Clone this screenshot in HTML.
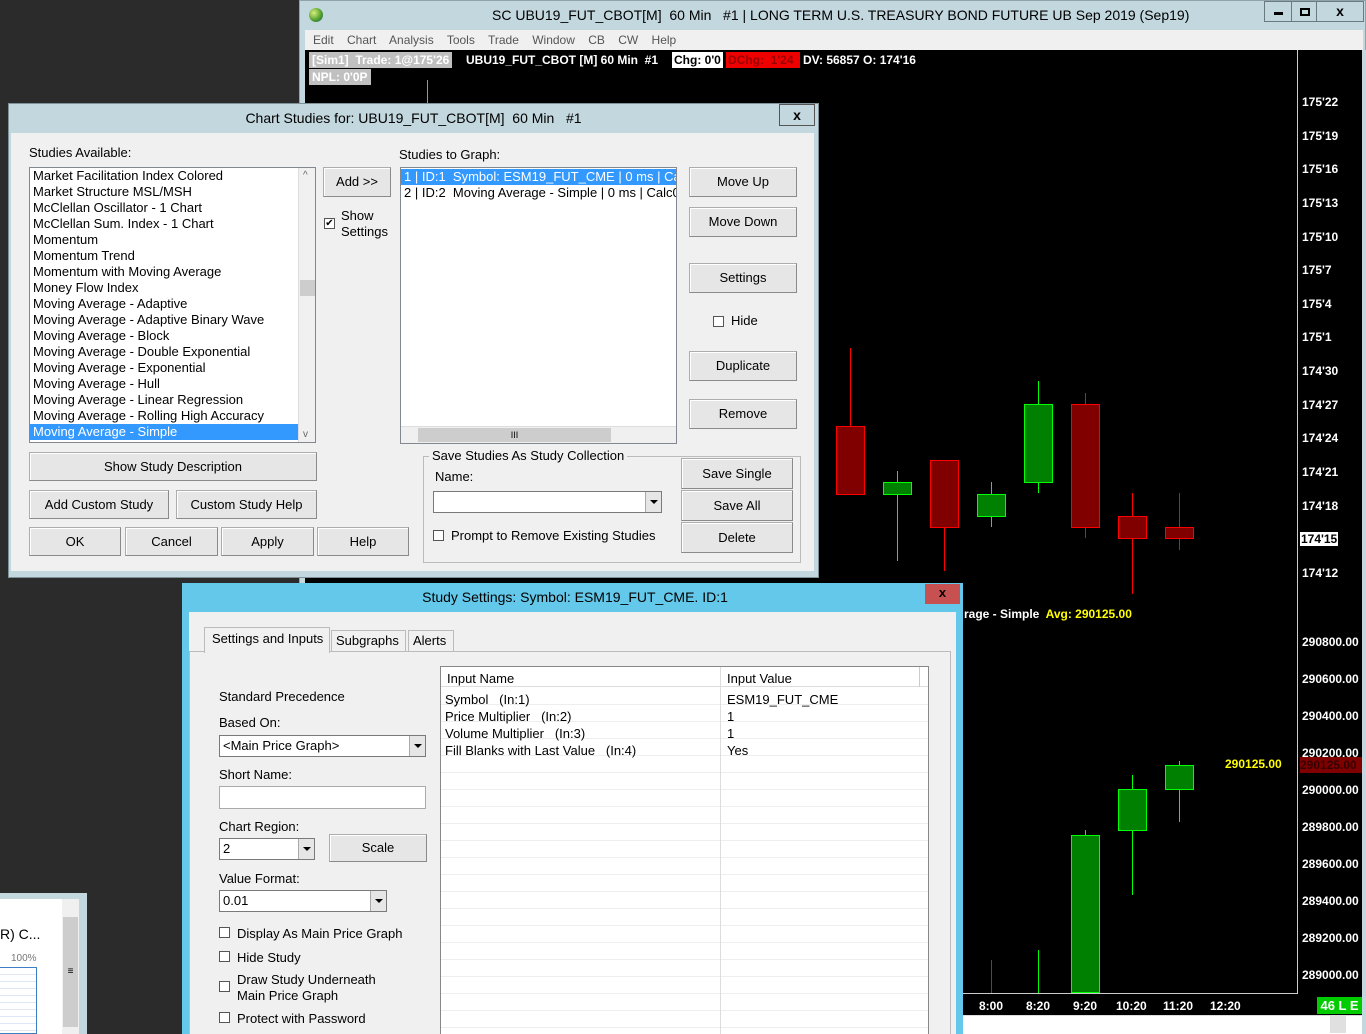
<!DOCTYPE html>
<html><head><meta charset="utf-8"><style>
*{box-sizing:border-box;margin:0;padding:0}
body{width:1366px;height:1034px;overflow:hidden;background:#2b2b2b;font-family:"Liberation Sans",sans-serif;font-size:13px;color:#000;position:relative}
.a{position:absolute}
.btn{position:absolute;background:#e6e6e6;border:1px solid #adadad;border-right-color:#8a8a8a;border-bottom-color:#8a8a8a;box-shadow:inset 1px 1px 0 #fff;text-align:center;font-size:13px}
.cb{position:absolute;width:11px;height:11px;border:1px solid #555;background:#fff}
.ch{font-weight:bold;font-size:12px;color:#fff;position:absolute;white-space:nowrap}
.px{position:absolute;left:1302px;font-weight:bold;font-size:12px;color:#fff}
.ln{position:absolute;width:1px}
.bd{position:absolute;border:1px solid}
.li{height:16px;line-height:16px;padding-left:3px;white-space:nowrap}
.combo{position:absolute;background:#fff;border:1px solid #7a7a7a}
.combo i{position:absolute;right:0;top:0;bottom:0;width:16px;background:#e6e6e6;border-left:1px solid #aaa}
.combo i:after{content:"";position:absolute;left:4px;top:8px;border:4px solid transparent;border-top:4px solid #000;border-bottom:0}
</style></head><body>

<!-- main window -->
<div class="a" style="left:299px;top:0;width:1067px;height:1034px;background:#c3d7de;border:1px solid #8fa3aa"></div>
<div class="a" style="left:309px;top:8px;width:14px;height:14px;border-radius:50%;background:radial-gradient(circle at 35% 35%,#d9f07a,#4a9a2a 60%,#2a5a8a)"></div>
<div class="a" style="left:492px;top:7px;font-size:14px">SC UBU19_FUT_CBOT[M]&nbsp; 60 Min&nbsp;&nbsp; #1 | LONG TERM U.S. TREASURY BOND FUTURE UB Sep 2019 (Sep19)</div>
<div class="a" style="left:1264px;top:1px;width:28px;height:21px;border:1px solid #6a7a80"><div class="a" style="left:9px;top:10px;width:9px;height:3px;background:#000"></div></div>
<div class="a" style="left:1291px;top:1px;width:26px;height:21px;border:1px solid #6a7a80"><div class="a" style="left:8px;top:6px;width:10px;height:8px;border:2px solid #000"></div></div>
<div class="a" style="left:1316px;top:1px;width:48px;height:21px;border:1px solid #6a7a80;font-weight:bold;text-align:center;line-height:19px;font-size:14px">x</div>
<div class="a" style="left:305px;top:30px;width:1058px;height:20px;background:#f0f0f0;color:#555;font-size:12px;line-height:20px;padding-left:8px;word-spacing:10px">Edit Chart Analysis Tools Trade Window CB CW Help</div>
<div class="a" style="left:305px;top:50px;width:1058px;height:965px;background:#000"></div>
<div class="a" style="left:1362px;top:50px;width:4px;height:984px;background:#c3d7de"></div>
<div class="ln" style="left:1297px;top:50px;height:944px;background:#ccc"></div>
<div class="a" style="left:963px;top:993px;width:335px;height:1px;background:#ccc"></div>

<div class="ch" style="left:309px;top:52px;background:#c0c0c0;padding:0 3px;height:16px;line-height:16px">[Sim1]&nbsp; Trade: 1@175'26</div>
<div class="ch" style="left:466px;top:52px;line-height:16px">UBU19_FUT_CBOT [M] 60 Min&nbsp; #1</div>
<div class="ch" style="left:672px;top:52px;background:#fff;color:#000;line-height:16px;padding:0 2px">Chg: 0'0</div>
<div class="ch" style="left:726px;top:52px;background:#e00;color:#900;line-height:16px;width:74px;padding-left:2px">DChg:&nbsp; 1'24</div>
<div class="ch" style="left:803px;top:52px;line-height:16px">DV: 56857 O: 174'16</div>
<div class="ch" style="left:309px;top:69px;background:#c0c0c0;padding:0 3px;height:16px;line-height:16px">NPL: 0'0P</div>
<div class="ln" style="left:427px;top:80px;height:24px;background:#0f0"></div>

<!-- price axis upper -->
<div class="px" style="top:95px">175'22</div><div class="px" style="top:129px">175'19</div><div class="px" style="top:162px">175'16</div>
<div class="px" style="top:196px">175'13</div><div class="px" style="top:230px">175'10</div><div class="px" style="top:263px">175'7</div>
<div class="px" style="top:297px">175'4</div><div class="px" style="top:330px">175'1</div><div class="px" style="top:364px">174'30</div>
<div class="px" style="top:398px">174'27</div><div class="px" style="top:431px">174'24</div><div class="px" style="top:465px">174'21</div>
<div class="px" style="top:499px">174'18</div><div class="px" style="top:532px;background:#fff;color:#000;padding:0 1px;left:1300px">174'15</div><div class="px" style="top:566px">174'12</div>

<!-- upper candles -->
<div class="ln" style="left:850px;top:348px;height:78px;background:#f00"></div><div class="bd" style="left:836px;top:426px;width:29px;height:69px;background:#800000;border-color:#f00"></div>
<div class="ln" style="left:897px;top:471px;height:90px;background:#0f0"></div><div class="bd" style="left:883px;top:482px;width:29px;height:13px;background:#008000;border-color:#0f0"></div>
<div class="ln" style="left:944px;top:460px;height:111px;background:#f00"></div><div class="bd" style="left:930px;top:460px;width:29px;height:68px;background:#800000;border-color:#f00"></div>
<div class="ln" style="left:991px;top:482px;height:45px;background:#0f0"></div><div class="bd" style="left:977px;top:494px;width:29px;height:23px;background:#008000;border-color:#0f0"></div>
<div class="ln" style="left:1038px;top:381px;height:112px;background:#0f0"></div><div class="bd" style="left:1024px;top:404px;width:29px;height:79px;background:#008000;border-color:#0f0"></div>
<div class="ln" style="left:1085px;top:393px;height:145px;background:#f00"></div><div class="bd" style="left:1071px;top:404px;width:29px;height:124px;background:#800000;border-color:#f00"></div>
<div class="ln" style="left:1132px;top:493px;height:101px;background:#f00"></div><div class="bd" style="left:1118px;top:516px;width:29px;height:23px;background:#800000;border-color:#f00"></div>
<div class="ln" style="left:1179px;top:493px;height:57px;background:#f00"></div><div class="bd" style="left:1165px;top:527px;width:29px;height:12px;background:#800000;border-color:#f00"></div>

<!-- lower chart -->
<div class="ch" style="left:964px;top:607px">rage - Simple&nbsp; <span style="color:#ff0">Avg: 290125.00</span></div>
<div class="px" style="top:635px">290800.00</div><div class="px" style="top:672px">290600.00</div><div class="px" style="top:709px">290400.00</div>
<div class="px" style="top:746px">290200.00</div><div class="px" style="top:783px">290000.00</div><div class="px" style="top:820px">289800.00</div>
<div class="px" style="top:857px">289600.00</div><div class="px" style="top:894px">289400.00</div><div class="px" style="top:931px">289200.00</div><div class="px" style="top:968px">289000.00</div>
<div class="a" style="left:1300px;top:757px;width:62px;height:16px;background:#800000;color:#300;font-weight:bold;font-size:12px;line-height:16px">290125.00</div>
<div class="ch" style="left:1225px;top:757px;color:#ff0">290125.00</div>
<div class="ln" style="left:991px;top:960px;height:33px;background:#f00"></div>
<div class="ln" style="left:1038px;top:950px;height:43px;background:#0f0"></div>
<div class="ln" style="left:1085px;top:830px;height:6px;background:#0f0"></div><div class="bd" style="left:1071px;top:835px;width:29px;height:158px;background:#008000;border-color:#0f0"></div>
<div class="ln" style="left:1132px;top:775px;height:120px;background:#0f0"></div><div class="bd" style="left:1118px;top:789px;width:29px;height:42px;background:#008000;border-color:#0f0"></div>
<div class="ln" style="left:1179px;top:761px;height:61px;background:#0f0"></div><div class="bd" style="left:1165px;top:765px;width:29px;height:25px;background:#008000;border-color:#0f0"></div>
<div class="ch" style="left:979px;top:999px">8:00</div><div class="ch" style="left:1026px;top:999px">8:20</div><div class="ch" style="left:1073px;top:999px">9:20</div>
<div class="ch" style="left:1116px;top:999px">10:20</div><div class="ch" style="left:1163px;top:999px">11:20</div><div class="ch" style="left:1210px;top:999px">12:20</div>
<div class="a" style="left:1317px;top:997px;width:45px;height:17px;background:#0c0;color:#fff;font-weight:bold;font-size:13px;text-align:center;line-height:17px">46 L E</div>
<div class="a" style="left:963px;top:1015px;width:399px;height:19px;background:#fff;border-top:1px solid #ddd"></div>
<div class="a" style="left:1330px;top:1016px;width:16px;height:17px;background:#e0e0e0"></div>

<!-- Chart Studies dialog -->
<div class="a" style="left:8px;top:103px;width:811px;height:475px;background:#c3d7de;border:1px solid #7f9196"></div>
<div class="a" style="left:8px;top:110px;width:811px;text-align:center;font-size:14px">Chart Studies for: UBU19_FUT_CBOT[M]&nbsp; 60 Min&nbsp;&nbsp; #1</div>
<div class="a" style="left:779px;top:104px;width:36px;height:22px;border:1px solid #555;text-align:center;font-weight:bold;font-size:14px;line-height:20px">x</div>
<div class="a" style="left:11px;top:133px;width:803px;height:438px;background:#f0f0f0"></div>
<div class="a" style="left:29px;top:145px">Studies Available:</div>
<div class="a" style="left:29px;top:167px;width:287px;height:276px;background:#fff;border:1px solid #828790;overflow:hidden;padding-top:0">
<div class="li">Market Facilitation Index Colored</div><div class="li">Market Structure MSL/MSH</div><div class="li">McClellan Oscillator - 1 Chart</div><div class="li">McClellan Sum. Index - 1 Chart</div><div class="li">Momentum</div><div class="li">Momentum Trend</div><div class="li">Momentum with Moving Average</div><div class="li">Money Flow Index</div><div class="li">Moving Average - Adaptive</div><div class="li">Moving Average - Adaptive Binary Wave</div><div class="li">Moving Average - Block</div><div class="li">Moving Average - Double Exponential</div><div class="li">Moving Average - Exponential</div><div class="li">Moving Average - Hull</div><div class="li">Moving Average - Linear Regression</div><div class="li">Moving Average - Rolling High Accuracy</div><div class="li" style="background:#3399ff;color:#fff;width:268px">Moving Average - Simple</div>
<div class="a" style="right:0;top:0;width:17px;height:274px;background:#f0f0f0;border-left:1px solid #ddd"><div class="a" style="left:1px;top:112px;width:15px;height:16px;background:#cdcdcd"></div><div class="a" style="left:4px;top:2px;font-size:10px;color:#666">^</div><div class="a" style="left:4px;bottom:2px;font-size:10px;color:#666">v</div></div>
</div>
<div class="btn" style="left:323px;top:167px;width:68px;height:30px;line-height:28px">Add &gt;&gt;</div>
<div class="cb" style="left:324px;top:218px;font-size:10px;line-height:9px;text-align:center">✔</div>
<div class="a" style="left:341px;top:208px;line-height:16px">Show<br>Settings</div>
<div class="a" style="left:399px;top:147px">Studies to Graph:</div>
<div class="a" style="left:400px;top:167px;width:277px;height:277px;background:#fff;border:1px solid #828790;overflow:hidden">
<div class="li" style="background:#3399ff;color:#fff;margin-top:1px">1 | ID:1&nbsp; Symbol: ESM19_FUT_CME | 0 ms | Calc</div>
<div class="li">2 | ID:2&nbsp; Moving Average - Simple | 0 ms | Calc0</div>
<div class="a" style="left:0;bottom:0;width:275px;height:17px;background:#f0f0f0;border-top:1px solid #ddd"><div class="a" style="left:17px;top:1px;width:193px;height:14px;background:#cdcdcd;text-align:center;font-size:9px;line-height:14px">III</div></div>
</div>
<div class="btn" style="left:689px;top:167px;width:108px;height:30px;line-height:28px">Move Up</div>
<div class="btn" style="left:689px;top:207px;width:108px;height:30px;line-height:28px">Move Down</div>
<div class="btn" style="left:689px;top:263px;width:108px;height:30px;line-height:28px">Settings</div>
<div class="cb" style="left:713px;top:316px"></div><div class="a" style="left:731px;top:313px">Hide</div>
<div class="btn" style="left:689px;top:351px;width:108px;height:30px;line-height:28px">Duplicate</div>
<div class="btn" style="left:689px;top:399px;width:108px;height:30px;line-height:28px">Remove</div>
<div class="btn" style="left:29px;top:452px;width:288px;height:29px;line-height:27px">Show Study Description</div>
<div class="btn" style="left:29px;top:490px;width:140px;height:29px;line-height:27px">Add Custom Study</div>
<div class="btn" style="left:176px;top:490px;width:141px;height:29px;line-height:27px">Custom Study Help</div>
<div class="btn" style="left:29px;top:527px;width:92px;height:29px;line-height:27px">OK</div>
<div class="btn" style="left:125px;top:527px;width:93px;height:29px;line-height:27px">Cancel</div>
<div class="btn" style="left:221px;top:527px;width:93px;height:29px;line-height:27px">Apply</div>
<div class="btn" style="left:317px;top:527px;width:92px;height:29px;line-height:27px">Help</div>
<div class="a" style="left:423px;top:456px;width:378px;height:107px;border:1px solid #bbb"></div>
<div class="a" style="left:429px;top:448px;background:#f0f0f0;padding:0 3px">Save Studies As Study Collection</div>
<div class="a" style="left:435px;top:469px">Name:</div>
<div class="combo" style="left:433px;top:491px;width:229px;height:22px"><i></i></div>
<div class="cb" style="left:433px;top:530px"></div><div class="a" style="left:451px;top:528px">Prompt to Remove Existing Studies</div>
<div class="btn" style="left:681px;top:458px;width:112px;height:31px;line-height:29px">Save Single</div>
<div class="btn" style="left:681px;top:490px;width:112px;height:31px;line-height:29px">Save All</div>
<div class="btn" style="left:681px;top:522px;width:112px;height:31px;line-height:29px">Delete</div>

<!-- bottom-left window -->
<div class="a" style="left:0;top:893px;width:87px;height:141px;background:#c3d7de"></div>
<div class="a" style="left:0;top:899px;width:62px;height:135px;background:#fff"></div>
<div class="a" style="left:62px;top:899px;width:17px;height:135px;background:#f0f0f0"><div class="a" style="left:1px;top:18px;width:15px;height:110px;background:#cdcdcd;text-align:center;line-height:110px;font-size:10px">≡</div></div>
<div class="a" style="left:0;top:926px;font-size:14px">R) C...</div>
<div class="a" style="left:11px;top:953px;font-size:10px;color:#777">100%</div>
<div class="a" style="left:-1px;top:967px;width:38px;height:67px;border:1px solid #3b7fc4;background:repeating-linear-gradient(#fff 0 6px,#dde8f4 6px 7px)"></div>

<!-- Study Settings dialog -->
<div class="a" style="left:182px;top:583px;width:781px;height:451px;background:#63c8ea"></div>
<div class="a" style="left:182px;top:589px;width:781px;text-align:center;font-size:14px;padding-left:5px">Study Settings: Symbol: ESM19_FUT_CME. ID:1</div>
<div class="a" style="left:925px;top:584px;width:35px;height:20px;background:#c75050;color:#000;text-align:center;font-weight:bold;line-height:18px">x</div>
<div class="a" style="left:189px;top:612px;width:767px;height:422px;background:#f0f0f0"></div>
<div class="a" style="left:189px;top:651px;width:762px;height:383px;border:1px solid #bbb;border-bottom:0;background:#f0f0f0"></div>
<div class="a" style="left:204px;top:627px;width:126px;height:26px;background:#f0f0f0;border:1px solid #bbb;border-bottom:0;padding:3px 0 0 7px">Settings and Inputs</div>
<div class="a" style="left:331px;top:630px;width:75px;height:22px;border:1px solid #bbb;border-bottom:0;padding:2px 0 0 4px">Subgraphs</div>
<div class="a" style="left:408px;top:630px;width:46px;height:22px;border:1px solid #bbb;border-bottom:0;padding:2px 0 0 4px">Alerts</div>
<div class="a" style="left:219px;top:689px">Standard Precedence</div>
<div class="a" style="left:219px;top:715px">Based On:</div>
<div class="combo" style="left:219px;top:735px;width:207px;height:22px;padding:2px 3px">&lt;Main Price Graph&gt;<i></i></div>
<div class="a" style="left:219px;top:767px">Short Name:</div>
<div class="a" style="left:219px;top:786px;width:207px;height:23px;background:#fff;border:1px solid #aaa"></div>
<div class="a" style="left:219px;top:819px">Chart Region:</div>
<div class="combo" style="left:219px;top:838px;width:96px;height:22px;padding:2px 3px">2<i></i></div>
<div class="btn" style="left:329px;top:834px;width:98px;height:28px;line-height:26px">Scale</div>
<div class="a" style="left:219px;top:871px">Value Format:</div>
<div class="combo" style="left:219px;top:890px;width:168px;height:22px;padding:2px 3px">0.01<i></i></div>
<div class="cb" style="left:219px;top:927px"></div><div class="a" style="left:237px;top:926px">Display As Main Price Graph</div>
<div class="cb" style="left:219px;top:951px"></div><div class="a" style="left:237px;top:950px">Hide Study</div>
<div class="cb" style="left:219px;top:981px"></div><div class="a" style="left:237px;top:972px;line-height:16px">Draw Study Underneath<br>Main Price Graph</div>
<div class="cb" style="left:219px;top:1012px"></div><div class="a" style="left:237px;top:1011px">Protect with Password</div>
<div class="a" style="left:440px;top:666px;width:489px;height:368px;background:#fff;border:1px solid #888;border-bottom:0;background-image:repeating-linear-gradient(#fff 0 16px,#eee 16px 17px);background-position:0 21px"></div>
<div class="a" style="left:441px;top:667px;width:487px;height:20px;background:#fff;border-bottom:1px solid #ddd"></div>
<div class="a" style="left:720px;top:667px;width:1px;height:367px;background:#ddd"></div>
<div class="a" style="left:919px;top:667px;width:1px;height:20px;background:#ccc"></div>
<div class="a" style="left:447px;top:671px">Input Name</div><div class="a" style="left:727px;top:671px">Input Value</div>
<div class="a" style="left:445px;top:691px;line-height:17px;white-space:pre">Symbol   (In:1)
Price Multiplier   (In:2)
Volume Multiplier   (In:3)
Fill Blanks with Last Value   (In:4)</div>
<div class="a" style="left:727px;top:691px;line-height:17px">ESM19_FUT_CME<br>1<br>1<br>Yes</div>
</body></html>
